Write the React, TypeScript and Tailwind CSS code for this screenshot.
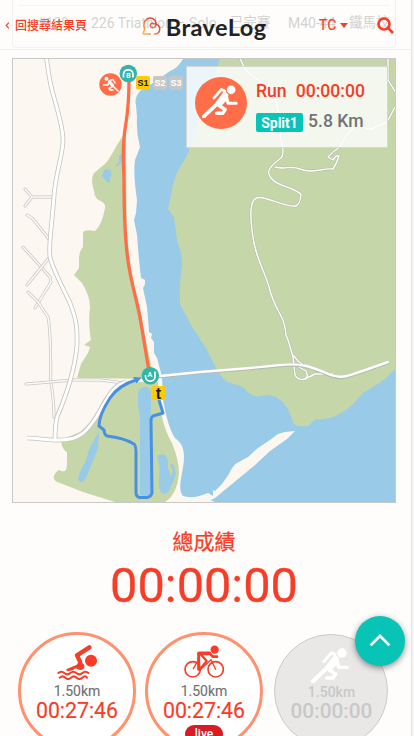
import React from "react";

const FONT = "font-[Roboto,'Noto_Sans_CJK_TC',sans-serif]";

function Runner({ className }: { className?: string }) {
  return (
    <svg viewBox="0 0 115 105" className={className} fill="none" stroke="currentColor" strokeWidth="10" strokeLinecap="round" strokeLinejoin="round">
      <circle cx="93" cy="15" r="14" fill="currentColor" stroke="none" />
      <path d="M38 41 62 14 72 19" strokeWidth="9" />
      <path d="M72 25 80 32 74 47 56 67 47 58Z" fill="currentColor" strokeWidth="9" />
      <path d="M78 36 83 58H109" />
      <path d="M48 60 6 100" strokeWidth="12" />
      <path d="M55 66 74 78 66 90H47" strokeWidth="11" />
    </svg>
  );
}

function Swimmer() {
  return (
    <svg viewBox="0 0 122 104" className="h-[34.7px] w-[40.7px]" fill="none" stroke="currentColor" strokeLinecap="round" strokeLinejoin="round">
      <circle cx="102" cy="47" r="18" fill="currentColor" stroke="none" />
      <path d="M97 7 60 31 69 50" strokeWidth="13" />
      <path d="M68 50 78 60Q82 68 74 71Q66 73 61 68 52 66 46 73 38 76 31 75L62 61Z" fill="currentColor" strokeWidth="6" />
      <path d="M4 84q9-8 18 0t18 0 18 0 18 0 18 0" strokeWidth="6" />
      <path d="M8 98q9-8 17 0t17 0 17 0 17 0 14 0" strokeWidth="6" />
    </svg>
  );
}

function Cyclist() {
  return (
    <svg viewBox="0 0 122 100" className="h-[33.3px] w-[40.7px]" fill="none" stroke="currentColor" strokeLinecap="round" strokeLinejoin="round">
      <circle cx="26" cy="73" r="23" strokeWidth="5" />
      <circle cx="95" cy="73" r="23" strokeWidth="5" />
      <circle cx="92" cy="14" r="12.500" fill="currentColor" stroke="none" />
      <path d="M28 71 43 45M95 73 81 44 50 73" strokeWidth="4" />
      <path d="M45 25H75" strokeWidth="11" />
      <path d="M76 24 86 35H99" strokeWidth="8" />
      <path d="M44 28V73" strokeWidth="9" />
      <path d="M50 28 68 48 47 74" strokeWidth="7" />
    </svg>
  );
}

const thickRoads = [
  "M46.5 58C48 70 50 82 52 90C56 106 63 125 63 140C63 156 55 174 54 197L51 230Q49 249 50 257C53 270 64 290 70 303C78 323 77 332 77 345C75 370 66 396 57 417Q55 426 55 440",
  "M27 438C38 438 48 441 60 440C78 440 86 432 92 423C101 412 106 396 115 388Q119 384 126 382",
];
const thinRoads = [
  "M25 189 32 197H53M25 206 32 197",
  "M27 215 32 218 41 229 49 239",
  "M23 247 42 268 50 277 51 282 35 308",
  "M27 285 49 258",
  "M28 292 38 302 48 317Q51 330 50.7 382Q54 400 54 417",
  "M26 384 50 382 73 380 100 380 125 383",
];
const hillRoads = [
  "M240 58Q245 74 263 83Q276 94 278 110L281 140Q285 154 281 158Q266 169 269 174C272 184 286 186 292 189Q301 193 301 195Q300 204 296 206C284 207 268 197 259 197.500C248 197 251 222 252 230C254 256 266 274 269 287C275 312 285 315 286 335",
  "M286 335 288 340 293 357 295 375Q298 381 305 379Q309 376 306 371L297 366",
  "M293 355 298 361 305 366M305 379 315 374H333",
  "M275 167C286 170 291 165 300 169C313 174 321 168 333 169Q337 163 339 156L336 156 333 160 328 157Q333 151 340 147Q346 136 349 132C362 118 364 131 371 129L387 122 395 107",
  "M388 58V80L396 93",
];

function RaceMap() {
  return (
    <svg viewBox="13 59 382 443" className="block h-full w-full" fill="none" strokeLinejoin="round">
      <rect x="13" y="59" width="382" height="443" fill="#fdf7f2" />
      <path fill="#99cbe8" d="M183 59Q178 68 170 71L147 87 140 91Q134 98 136 105L137 117Q136 132 140 147L135 160Q133 173 137 200L136 213 134 220 137 235 139 260 141 278 145 280 145 284 143 288 147 307 149 332 152 334 151 338 154 342 154 353 157 358 162 377 163 400Q168 428 175 438C186 446 185 457 182 473Q178 491 183 496Q193 499 207 494L210 500 215 502H395V59Z" />
      <path fill="#c5d6a8" d="M220 59 195 133Q187 158 180 167C172 180 172 195 168 209L174 217 177 240Q183 258 182 264Q179 284 180 304L192 327 206 348 217 370Q224 382 233 384Q241 385 245 389Q252 398 262 396C275 391 287 404 290 414L294 424Q296 427 308 426L316 419C338 421 352 406 363 393C371 388 385 381 395 369V59Z" />
      <path fill="#c5d6a8" d="M124 134 117 145Q110 158 106 163L94 173Q90 179 94 191Q95 200 101 201Q106 204 105 208Q102 225 95 231Q84 229 83 233L83 247Q80 250 79 257V268L74 275 82 283Q90 296 90 307Q88 325 91 340L84 345 90 347 88 353 81 364 77 378 154 379 145 336 140 308Q130 276 127 230Q126 170 126 134Z" />
      <path fill="#c5d6a8" d="M132 382H158C160 410 162 425 172 443Q179 460 179 473C178 488 172 498 165 502H115L83 492 60 483C50 480 54 473 59 470C68 474 67 469 67 452Q62 450 61 440L80 432Q93 422 103 400Q114 384 132 382Z" />
      <path fill="#fdf7f2" d="M183 497Q195 499 200 496L208 493 213 496V490L215 491 222 484 229 474Q233 465 237 463L248 457 258 448 270 440 278 434 285 432 295 431 287 439 270 451 255 465 238 479 215 498 207 502H180Z" />
      <g fill="#99cbe8">
        <path d="M143 387Q152 385 151 400V494Q147 497 140 495V416L138 405V394Q138 388 143 387Z" />
        <path d="M98 433 99 432 98 448 93 461 86 478Q82 485 78 480Q80 469 85 463L90 447Z" />
        <path d="M157 456Q163 452 167 457L168 461 168 468 171 477 173 470 170 465 173 464 176 473 174 480 171 486Q168 496 162 493C155 486 163 473 157 456Z" />
        <path d="M104 170Q109 168 111 171Q112 175 110 178Q111 184 107 182L102 176Z" />
        <path d="M123 152V160L118 166 115 166 119 162 119 156Z" />
      </g>
      {thinRoads.map((d) => (
        <g key={d} strokeLinecap="round">
          <path d={d} stroke="#c5c5c2" strokeWidth="3" />
          <path d={d} stroke="#fdfbf8" strokeWidth="1.5" />
        </g>
      ))}
      {thickRoads.map((d) => (
        <path key={d} d={d} stroke="#c3c3c0" strokeWidth="4.6" />
      ))}
      {thickRoads.map((d) => (
        <path key={d} d={d} stroke="#ffffff" strokeWidth="3" />
      ))}
      {hillRoads.map((d) => (
        <path key={d} d={d} stroke="#b5b9a9" strokeWidth="2.5" />
      ))}
      {hillRoads.map((d) => (
        <path key={d} d={d} stroke="#ffffff" strokeWidth="1.4" />
      ))}
      <g strokeLinecap="round">
        <path stroke="#b4bbb0" strokeWidth="3.6" d="M160 376.500 200 372.500 250 368.500 280 365.500C303 363 312 368 325 373C342 382 349 375 358 373L388 362.500" />
        <path stroke="#ffffff" strokeWidth="2.400" d="M160 376 200 372 250 368 280 365C303 362.500 312 367.500 325 372.500C342 381 349 374.500 358 372.500L388 362" />
      </g>
      <path stroke="#4a90e2" strokeWidth="3" d="M159 400 163 413 153 416Q151 417 151 421L152 493Q151 497 147 497.500H139Q136 496 136 493V453Q136 444 133 443.500Q124 438 107 436Q104 434 104 430L99 426Q99 415 110 398Q119 385 136 380" />
      <path fill="#4a90e2" d="M133 377 141.500 377.500 136.500 383.500Z" />
      <path stroke="#ff6e48" strokeWidth="3.300" d="M129 80Q129 104 126 123C121 151 124 165 124 180Q124 239 129 267C132 286 138 304 141 323L149 371" />

      <circle cx="110.500" cy="84.500" r="11.200" fill="#ff6e48" />
      <g stroke="#fff" strokeLinecap="round" strokeWidth="1.500">
        <circle cx="106.500" cy="78.800" r="2" fill="#fff" stroke="none" />
        <path d="M109.500 81.500 112.500 85.500" strokeWidth="3" />
        <path d="M109 82 108 85 103.500 85M110.500 80 113 79.500 115 83M113 86 118 91M112 87 109 88.500 110 90H113" />
      </g>
      <circle cx="128.300" cy="73.500" r="8.800" fill="#34b5a9" />
      <path d="M123.500 77.500V74A4.800 4.800 0 0 1 133 74V77.500" stroke="#fff" strokeWidth="1.700" />
      <text x="128.500" y="77.500" textAnchor="middle" fill="#fff" className="font-[Roboto,sans-serif] text-[7px] font-bold">B</text>
      <circle cx="150.300" cy="375.800" r="8.800" fill="#34b5a9" />
      <path d="M145.500 375V377A4.800 4.800 0 0 0 155 377V371.500" stroke="#fff" strokeWidth="1.600" />
      <text x="149.800" y="376.500" textAnchor="middle" fill="#fff" className="font-[Roboto,sans-serif] text-[7px] font-bold">A</text>

      <rect x="136" y="76" width="14" height="13.500" rx="2" fill="#fecb05" />
      <text x="143" y="85.900" textAnchor="middle" fill="#181818" className="font-['Liberation_Sans',sans-serif] text-[9px] font-bold">S1</text>
      <rect x="153" y="76" width="14" height="13.500" rx="2" fill="#c7c7c7" />
      <text x="160" y="85.900" textAnchor="middle" fill="#fff" className="font-['Liberation_Sans',sans-serif] text-[9px] font-bold">S2</text>
      <rect x="169" y="76" width="14" height="13.500" rx="2" fill="#c7c7c7" />
      <text x="176" y="85.900" textAnchor="middle" fill="#fff" className="font-['Liberation_Sans',sans-serif] text-[9px] font-bold">S3</text>
      <rect x="151.500" y="386" width="14.200" height="14" rx="1.500" fill="#fecb05" />
      <text x="158.500" y="398.500" textAnchor="middle" fill="#181818" className="font-['Liberation_Sans',sans-serif] text-[16px] font-bold">t</text>
    </svg>
  );
}

function Logo() {
  return (
    <div className="flex items-center">
      <svg viewBox="0 0 56 54" className="h-[18px] w-[18.700px]" fill="none" strokeWidth="4.500" strokeLinecap="round" strokeLinejoin="round">
        <defs>
          <linearGradient id="brand" x1="0" y1="1" x2="1" y2="0">
            <stop offset="0" stopColor="#f9bd59" />
            <stop offset=".5" stopColor="#ef6b3e" />
            <stop offset="1" stopColor="#c9203a" />
          </linearGradient>
        </defs>
        <path stroke="url(#brand)" d="M25 51H3L8 36Q3 22 9 12C16 1 32 0 39 10C45 20 42 31 34 32C27 33 22 27 26 21Q29 17 35 20C46 20 54 27 53 36C53 46 46 51 37 51" />
      </svg>
      <span className="relative top-px ml-[5px] whitespace-nowrap font-[Lato,sans-serif] text-[23.500px] leading-7 font-bold tracking-[0.450px] text-[#222]">BraveLog</span>
    </div>
  );
}

function StatCircle({ children, muted = false }: { children: React.ReactNode; muted?: boolean }) {
  return (
    <div
      className={
        muted
          ? "mx-[2px] mt-[2px] flex h-[114px] w-[114px] shrink-0 flex-col items-center rounded-full border border-[#cbcbcb] bg-[#e9e8e7] pt-[13px] text-[#c8c8c8]"
          : "flex h-[118px] w-[118px] shrink-0 flex-col items-center rounded-full border-[3px] border-[#ff916f] bg-white pt-[10px] text-[#f73d27]"
      }
    >
      {children}
    </div>
  );
}

export default function App() {
  return (
    <div className={`relative h-[736px] w-[414px] overflow-hidden bg-[#fffdfc] ${FONT}`}>
      <header className="relative h-[50px] border-b border-[#fcede1]">
        <div className="mx-3 h-12 w-96 overflow-hidden rounded-b-[4px] border-x border-b border-[#f2f2f1] pt-[5px]">
          <div className="mx-[5px] h-px bg-[#f4f4f3]" />
          <div className="flex h-[34px] items-center whitespace-nowrap text-[14px] leading-none text-[#d3d3d2]">
            <span className="ml-6 w-[54px]">#139</span>
            <span className="w-[139px]">226 Triathlon – Solo</span>
            <span className="w-[58px] text-[13.500px]">已完賽</span>
            <span className="w-[61px]">M40-44</span>
            <span className="text-[13.500px]">鐵馬校</span>
          </div>
        </div>
        <div className="absolute inset-0 flex items-center pt-0.5">
          <div className="flex w-[142px] items-center pl-[5px] text-[#f73d27]">
            <svg viewBox="0 0 5 8" className="mr-[5px] h-[7px] w-[5px]" fill="none" stroke="currentColor" strokeWidth="1.3">
              <path d="M4 .7 1 4l3 3.300" />
            </svg>
            <span className="text-[12px] leading-none font-medium">回搜尋結果頁</span>
          </div>
          <div className="w-[177px]">
            <Logo />
          </div>
          <div className="flex items-center text-[#f73d27]">
            <span className="w-[21px] pb-px text-[14px] leading-none [-webkit-text-stroke:0.2px_#f73d27]">TC</span>
            <svg viewBox="0 0 8 5" className="h-[5px] w-[8px]" fill="currentColor">
              <path d="M0 0h8L4 5z" />
            </svg>
            <svg viewBox="0 0 17 17" className="ml-[29px] h-[17px] w-[17px]" fill="none" stroke="currentColor" strokeWidth="2.700">
              <circle cx="7" cy="7" r="5.500" />
              <path d="M11 11 16 16" />
            </svg>
          </div>
        </div>
      </header>

      <section className="relative mx-3 mt-2 h-[445px] w-96 border border-[#c7c9c9]">
        <RaceMap />
        <div className="absolute top-[7px] left-[173px] flex h-[82px] w-[202px] border border-[#d4d7d3] bg-white/80">
          <div className="mt-[10px] ml-2 flex h-[52px] w-[52px] items-center justify-center rounded-full bg-[#ff6e48] pr-[2px] pb-[3px] text-white">
            <Runner className="h-[33px] w-[36px]" />
          </div>
          <div className="ml-[9px] pt-[15px] font-medium">
            <div className="flex h-[20px] items-center gap-[9px] text-[17.600px] leading-none text-[#f73d27]">
              <span>Run</span>
              <span>00:00:00</span>
            </div>
            <div className="mt-[10px] flex h-[20px] items-center text-[17.600px] leading-none text-[#737373]">
              <span className="flex h-[19px] w-[47px] items-center justify-center rounded-[2px] bg-[#07c4b7] pt-px text-[14px] font-bold text-white">Split1</span>
              <span className="ml-[5px]">5.8 Km</span>
            </div>
          </div>
        </div>
      </section>

      <section className="w-[408px] pt-[27px] text-center text-[#f73d27]">
        <h2 className="text-[21px] leading-6 font-normal [-webkit-text-stroke:0.25px_#f73d27]">總成績</h2>
        <p className="mt-[7px] text-[48.700px] leading-[50px] whitespace-nowrap [-webkit-text-stroke:0.3px_#f73d27]">00:00:00</p>
      </section>

      <section className="mt-[21px] ml-[18px] flex gap-[9px]">
        <StatCircle>
          <Swimmer />
          <span className="mt-[3px] text-[14px] leading-[17px] text-[#707070] [-webkit-text-stroke:0.1px_#707070]">1.50km</span>
          <span className="text-[21.300px] leading-[21px] [-webkit-text-stroke:0.15px_#f73d27]">00:27:46</span>
        </StatCircle>
        <StatCircle>
          <Cyclist />
          <span className="mt-[4.400px] text-[14px] leading-[17px] text-[#707070] [-webkit-text-stroke:0.1px_#707070]">1.50km</span>
          <span className="text-[21.300px] leading-[21px] [-webkit-text-stroke:0.15px_#f73d27]">00:27:46</span>
          <span className="mt-[4px] flex h-[18px] w-[38px] shrink-0 items-center justify-center rounded-full bg-[#d81b24] text-[12px] leading-none font-medium text-white">live</span>
        </StatCircle>
        <StatCircle muted>
          <Runner className="relative right-px h-[35px] w-[38.300px] text-white" />
          <span className="mt-px pl-px text-[14px] leading-[17px] font-medium">1.50km</span>
          <span className="pl-px text-[20.800px] leading-[21px] font-medium">00:00:00</span>
        </StatCircle>
      </section>

      <button aria-label="Back to top" className="absolute top-[616px] left-[355px] flex h-[50px] w-[50px] items-center justify-center rounded-full bg-[#07c4b7] pb-[2px] shadow-[0_2px_6px_rgba(0,0,0,0.45)]">
        <svg viewBox="0 0 20 12" className="h-[12px] w-[20px]" fill="none" stroke="#fff" strokeWidth="2.700" strokeLinecap="round">
          <path d="M1.500 10.500 10 2 18.500 10.500" />
        </svg>
      </button>
      <div className="absolute top-0 right-0 h-full w-[3px] border-l border-[#e3e3e3] bg-[#f5f5f5]" />
    </div>
  );
}
